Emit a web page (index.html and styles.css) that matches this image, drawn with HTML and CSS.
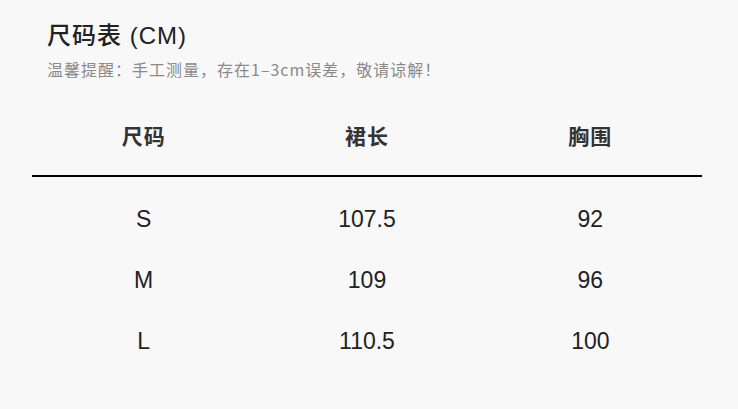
FILE: index.html
```html
<!DOCTYPE html>
<html lang="zh">
<head>
<meta charset="utf-8">
<link rel="stylesheet" href="styles.css">
</head>
<body>
<div class="page">
  <div class="head">
    <h1 class="title">尺码表 (CM)</h1>
    <p class="note">温馨提醒：手工测量，存在1–3cm误差，敬请谅解！</p>
  </div>
  <div class="table">
    <div class="row header">
      <div class="cell">尺码</div>
      <div class="cell">裙长</div>
      <div class="cell">胸围</div>
    </div>
    <div class="row data">
      <div class="cell">S</div>
      <div class="cell">107.5</div>
      <div class="cell">92</div>
    </div>
    <div class="row data">
      <div class="cell">M</div>
      <div class="cell">109</div>
      <div class="cell">96</div>
    </div>
    <div class="row data">
      <div class="cell">L</div>
      <div class="cell">110.5</div>
      <div class="cell">100</div>
    </div>
  </div>
</div>
</body>
</html>
```

FILE: styles.css
```css
html, body {
  margin: 0;
  padding: 0;
  background: #f8f8f8;
}
.page {
  width: 738px;
  height: 409px;
  box-sizing: border-box;
  padding: 0 36px 0 32px;
  font-family: "Liberation Sans", "Noto Sans CJK SC", sans-serif;
  color: #333;
}
.head {
  padding: 18px 0 0 15px;
}
.title {
  margin: 0;
  font-size: 24px;
  font-weight: 500;
  line-height: 36px;
  letter-spacing: 1px;
  color: #222;
}
.note {
  margin: 4px 0 0;
  font-family: "Noto Sans CJK SC", sans-serif;
  font-size: 16px;
  line-height: 22px;
  letter-spacing: 1px;
  color: #8a8a8a;
}
.table {
  margin-top: 32px;
}
.row {
  display: grid;
  grid-template-columns: 1fr 1fr 1fr;
  text-align: center;
}
.header {
  height: 63px;
  border-bottom: 2px solid #000;
  font-family: "Noto Sans CJK SC", sans-serif;
  font-size: 21px;
  font-weight: 700;
  line-height: 40px;
  letter-spacing: 1px;
  align-items: start;
}
.header .cell {
  padding-top: 3px;
}
.data {
  height: 61px;
  font-family: "Liberation Sans", Arial, sans-serif;
  font-size: 23px;
  line-height: 61px;
  color: #222;
}
.header + .data {
  margin-top: 12px;
}
```
